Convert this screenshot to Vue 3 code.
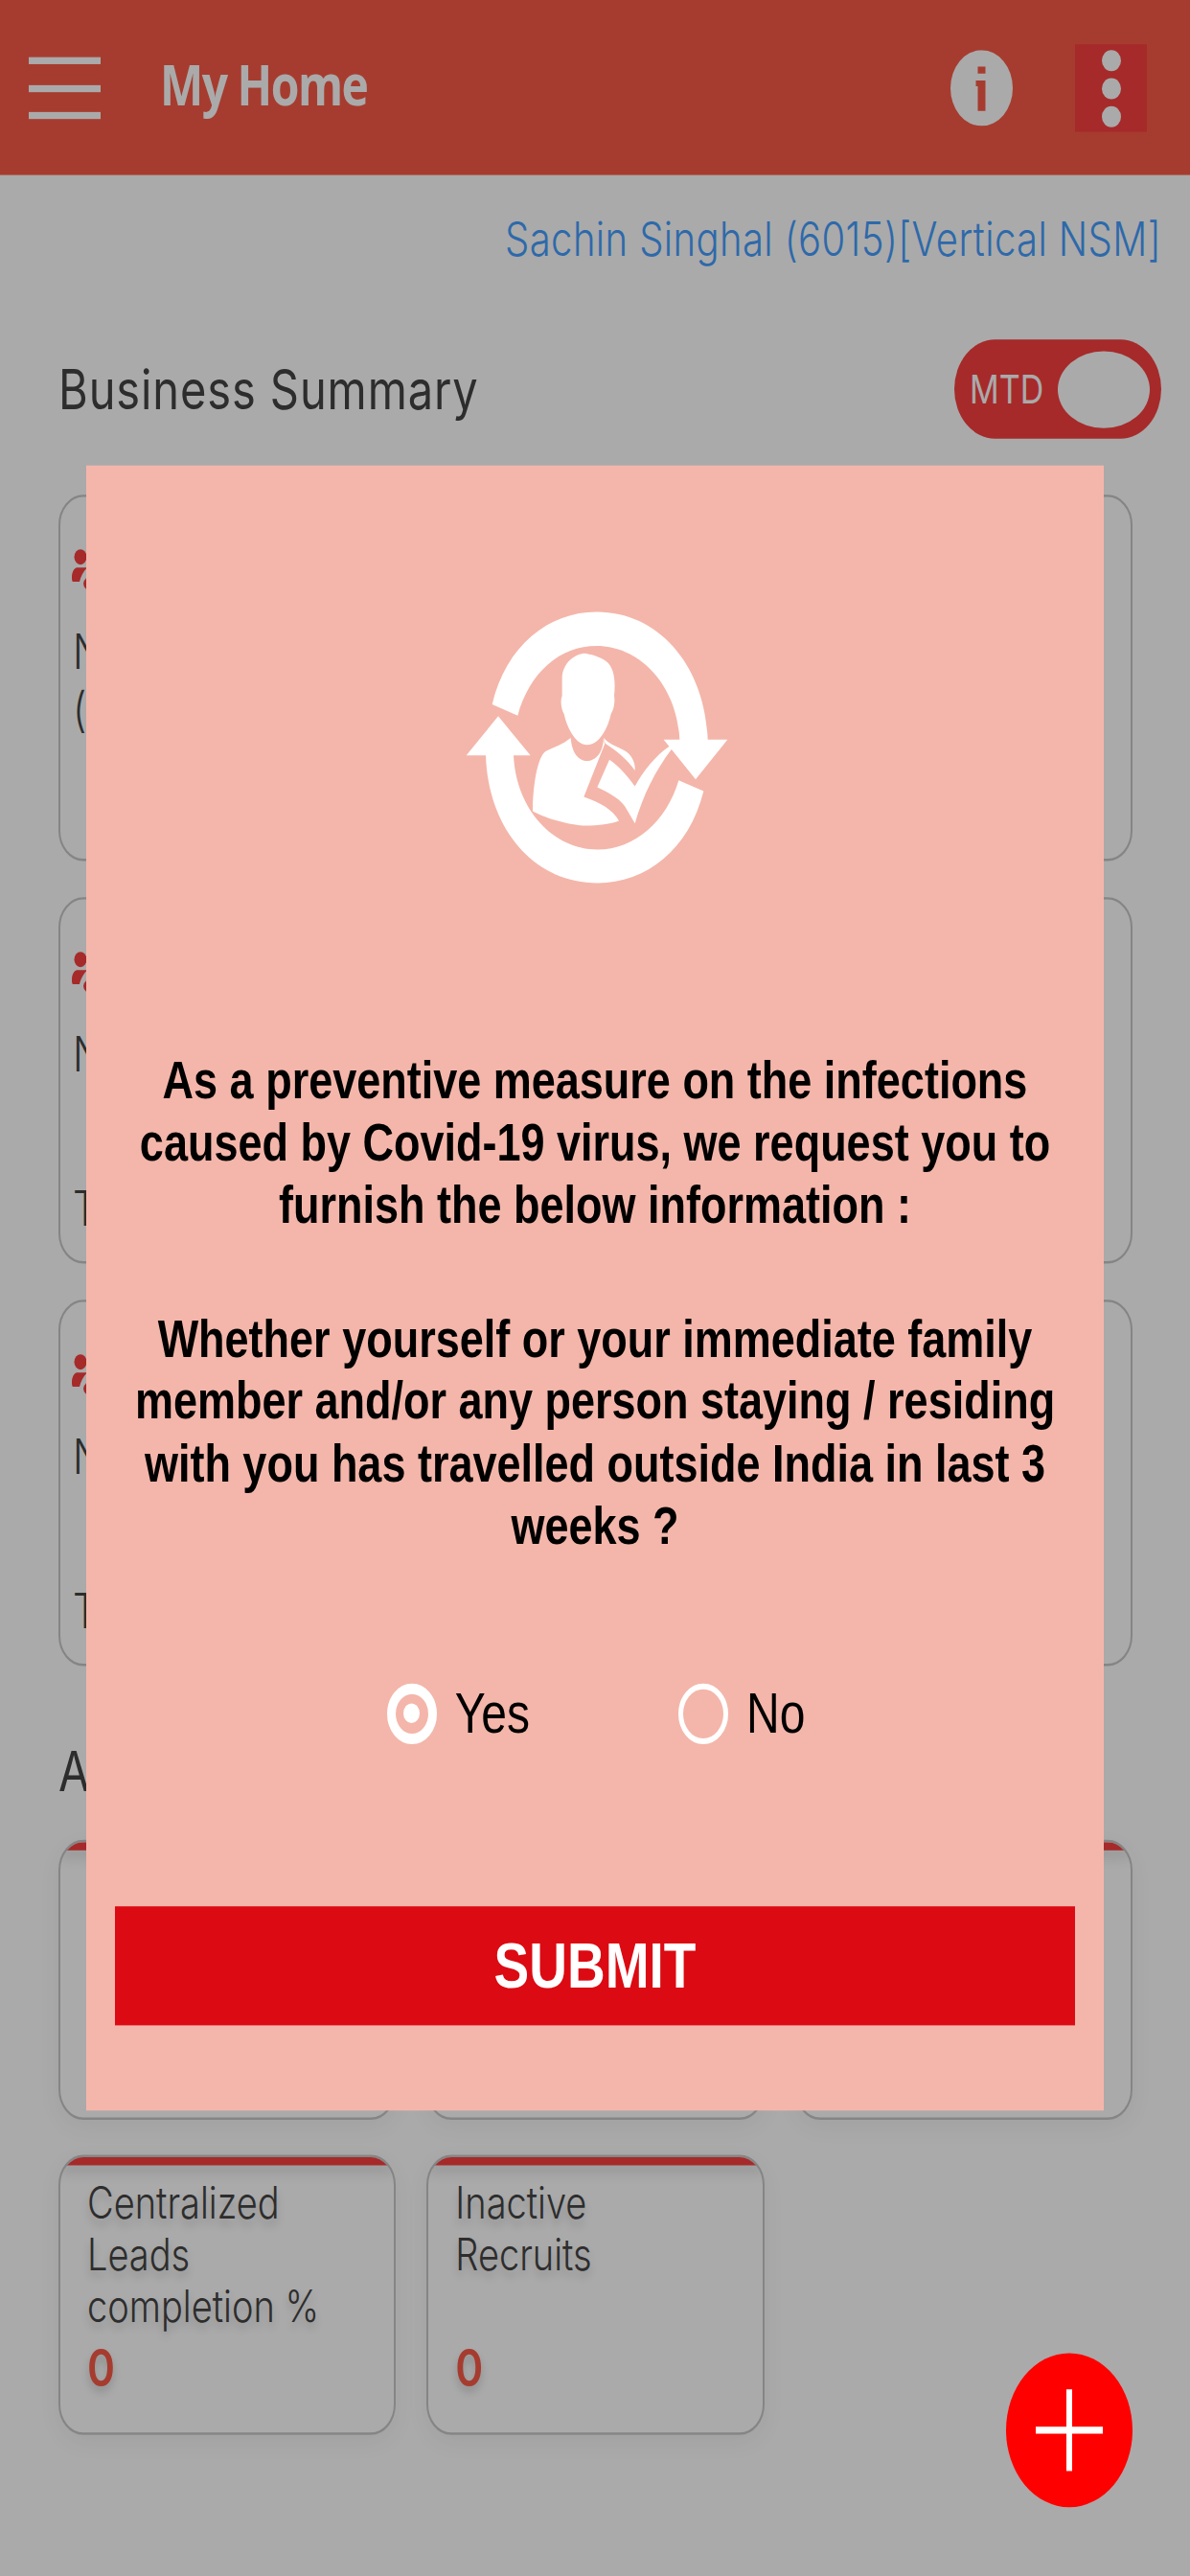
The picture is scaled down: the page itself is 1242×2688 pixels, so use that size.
<template>
  <div class="page">
    <div class="screen">
      <header class="topbar">
        <div class="menu-btn"><span></span><span></span><span></span></div>
        <div class="title">My Home</div>
        <svg class="info" viewBox="0 0 65 65">
          <circle cx="32.5" cy="32.5" r="32.5" fill="#fff" />
          <path d="M28.5 14h8v6h-8zM26.500 26h10v26h-8V31h-2z" fill="#fa5b47" />
        </svg>
        <div class="more-btn"><i></i><i></i><i></i></div>
      </header>

      <div class="user-line">Sachin Singhal (6015)[Vertical NSM]</div>

      <div class="summary-head">
        <h2 class="section-title">Business Summary</h2>
        <div class="toggle">
          <span>MTD</span>
          <b class="knob"></b>
        </div>
      </div>

      <div class="cards">
        <div v-for="card in cards" :key="card.id" class="card">
          <svg class="people" viewBox="0 0 40 50" preserveAspectRatio="none">
            <ellipse cx="9" cy="9" rx="6.500" ry="8" />
            <path d="M5 20h11c-4 4-7 10-8 15H2c-2 0-2-2-2-5 0-5 2-9 5-10z" />
            <ellipse cx="22" cy="37" rx="10" ry="8" />
          </svg>
          <div class="card-label">N</div>
          <div class="card-sub" :class="card.subClass">{{ card.sub }}</div>
        </div>
      </div>

      <h2 class="section-title second">A</h2>

      <div class="tiles">
        <div v-for="tile in tiles" :key="tile.id" class="tile">
          <div class="tile-bar"></div>
          <template v-if="tile.lines">
            <div class="tile-label">
              <div v-for="line in tile.lines" :key="line">{{ line }}</div>
            </div>
            <div class="tile-value">0</div>
          </template>
        </div>
      </div>

      <div class="dim">
        <div class="modal">
          <svg class="modal-icon" viewBox="0 0 1080 1020" preserveAspectRatio="none">
            <path d="M218 405C262 220 395 115 545 115c200 0 340 175 348 400h62L855 640 755 515h50C797 345 680 222 545 222c-115 0-210 83-247 218z" />
            <path d="M880 677C835 860 700 965 548 965c-203 0-343-175-350-400h-61l100-123 101 123h-53c8 170 125 295 263 295 117 0 217-90 254-217z" />
            <path d="M505 245c-35 5-68 35-68 80v53c-7 17-2 42 6 57 12 55 42 97 72 97 33 0 63-42 75-97 10-15 13-40 10-57 5-48 0-88-25-108-20-15-50-23-70-25z" />
            <path d="M464 510c-24 20-54 30-79 42-25 18-40 108-40 188 45 25 125 45 165 45s80-5 105-15c-20-35-55-55-110-75l65-165-3-20c-2 50-27 72-52 72s-47-22-51-72z" />
            <path d="M567 510l5 17c28 18 68 48 93 85 3-22-10-52-35-64-25-13-45-18-63-38z" />
            <path d="M775 535c-45 30-85 80-110 127-25-37-55-67-80-84l-38 87c43 20 78 40 93 70l25 43c25-88 65-168 115-233z" />
          </svg>

          <div class="question">
            <p>As a preventive measure on the infections caused by Covid-19 virus, we request you to furnish the below information :</p>
            <p>Whether yourself or your immediate family member and/or any person staying / residing with you has travelled outside India in last 3 weeks ?</p>
          </div>

          <div class="choices">
            <div class="choice">
              <span class="radio checked"><em></em></span>
              <span>Yes</span>
            </div>
            <div class="choice">
              <span class="radio"></span>
              <span>No</span>
            </div>
          </div>

          <button class="submit">SUBMIT</button>
        </div>
      </div>

      <div class="fab"><span class="plus-v"></span><span class="plus-h"></span></div>
    </div>
  </div>
</template>

<script setup>
const cards = [
  { id: 1, sub: '(', subClass: 'paren' },
  { id: 2, sub: 'T', subClass: '' },
  { id: 3, sub: 'T', subClass: '' }
]

const tiles = [
  { id: 1 },
  { id: 2 },
  { id: 3 },
  { id: 4, lines: ['Centralized', 'Leads', 'completion %'] },
  { id: 5, lines: ['Inactive', 'Recruits'] }
]
</script>

<style scoped>
.page {
  width: 1242px;
  height: 2688px;
  overflow: hidden;
}

/* the source shot is a 1242x2208 layout stretched to 2688 tall */
.screen {
  position: relative;
  width: 1242px;
  height: 2208px;
  background: #fff;
  transform: scaleY(1.2174);
  transform-origin: top left;
  font-family: Inter, "Liberation Sans", sans-serif;
  color: #444;
}

.topbar {
  display: flex;
  align-items: flex-start;
  height: 150px;
  background: #fa5b47;
  padding: 38px 45px 0 30px;
  box-sizing: border-box;
}

.menu-btn {
  display: flex;
  flex-direction: column;
  gap: 17.500px;
  width: 75px;
  margin-top: 11px;
}

.menu-btn span {
  height: 6px;
  background: #fff;
}

.title {
  font-family: "Open Sans", sans-serif;
  font-size: 48px;
  font-weight: 700;
  line-height: 60px;
  color: #fff;
  margin: 4px 0 0 62px;
  letter-spacing: -1.500px;
}

.info {
  width: 65px;
  height: 65px;
  margin: 5px 0 0 auto;
}

.more-btn {
  display: flex;
  flex-direction: column;
  align-items: center;
  gap: 6px;
  width: 75px;
  height: 75px;
  margin-left: 65px;
  padding-top: 5px;
  box-sizing: border-box;
  background: #fa4040;
}

.more-btn i {
  width: 20px;
  height: 18px;
  border-radius: 50%;
  background: #fff;
}

.user-line {
  margin-top: 32px;
  padding-right: 30px;
  text-align: right;
  font-size: 40px;
  font-weight: 300;
  line-height: 46px;
  letter-spacing: 0.4px;
  color: #449eff;
}

.summary-head {
  display: flex;
  justify-content: space-between;
  align-items: center;
  margin-top: 63px;
  padding: 0 30px 0 61px;
}

.section-title {
  margin: 0;
  font-size: 47px;
  font-weight: 400;
  line-height: 52px;
  letter-spacing: 0.9px;
  color: #444;
}

.toggle {
  display: flex;
  align-items: center;
  justify-content: space-between;
  width: 216px;
  height: 85px;
  padding: 0 12px 0 16px;
  box-sizing: border-box;
  border-radius: 43px;
  background: #fa4040;
  color: #fff;
  font-size: 34px;
}

.knob {
  width: 96px;
  height: 66px;
  border-radius: 50%;
  background: #fff;
}

.cards {
  display: flex;
  flex-direction: column;
  gap: 31px;
  margin: 48px 60px 0 61px;
}

.card {
  height: 314px;
  padding: 44px 0 0 12px;
  box-sizing: border-box;
  border: 2px solid #c8c8c8;
  border-radius: 26px;
}

.people {
  display: block;
  width: 40px;
  height: 41px;
  fill: #fa4040;
}

.card-label {
  margin: 22px 0 0 1px;
  font-size: 41px;
  font-weight: 300;
  line-height: 50px;
}

.card-sub {
  margin: 83px 0 0 1px;
  font-size: 41px;
  font-weight: 300;
  line-height: 50px;
}

.card-sub.paren {
  margin-top: 0;
}

.second {
  margin: 64px 0 0 61px;
}

.tiles {
  display: grid;
  grid-template-columns: repeat(3, 1fr);
  gap: 30px 32px;
  margin: 33px 60px 0 61px;
}

.tile {
  height: 240px;
  box-sizing: border-box;
  border: 2px solid #c8c8c8;
  border-radius: 26px;
  overflow: hidden;
  box-shadow: 0 6px 22px rgba(0, 0, 0, 0.05);
}

.tile-bar {
  height: 7px;
  background: #fa4040;
  box-shadow: 0 6px 12px rgba(0, 0, 0, 0.14);
}

.tile-label {
  height: 132px;
  margin-top: 10px;
  padding-left: 28px;
  font-size: 38px;
  font-weight: 300;
  line-height: 44px;
  text-shadow: 0 5px 8px rgba(0, 0, 0, 0.18);
}

.tile-value {
  padding-left: 28px;
  margin-top: 9px;
  font-size: 44px;
  font-weight: 600;
  line-height: 44px;
  color: #fa5b47;
  text-shadow: 0 5px 8px rgba(0, 0, 0, 0.18);
}

.dim {
  position: absolute;
  inset: 0;
  display: flex;
  justify-content: center;
  align-items: flex-start;
  padding-top: 399px;
  box-sizing: border-box;
  background: rgba(0, 0, 0, 0.335);
}

.modal {
  display: flex;
  flex-direction: column;
  align-items: center;
  width: 1062px;
  height: 1410px;
  padding: 94px 30px 0;
  box-sizing: border-box;
  background: #f4b6aa;
  font-family: "Liberation Sans", Arial, sans-serif;
  color: #000;
}

.modal-icon {
  width: 360px;
  height: 279px;
  fill: #fff;
}

.question {
  margin-top: 127px;
  text-align: center;
  font-size: 45px;
  font-weight: 700;
  line-height: 53.500px;
}

.question p {
  margin: 0 0 61px;
}

.choices {
  display: flex;
  gap: 155px;
  margin-top: 47px;
  padding-left: 2px;
  font-size: 48px;
  line-height: 52px;
}

.choice {
  display: flex;
  align-items: center;
  gap: 19px;
}

.radio {
  display: flex;
  align-items: center;
  justify-content: center;
  width: 52px;
  height: 52px;
  box-sizing: border-box;
  border: 5px solid #fff;
  border-radius: 50%;
}

.radio.checked {
  border-width: 9px;
}

.radio em {
  width: 17px;
  height: 17px;
  border-radius: 50%;
  background: #fff;
}

.submit {
  width: 1002px;
  height: 102px;
  margin-top: 139px;
  border: 0;
  background: #dc0a12;
  color: #fff;
  font-family: inherit;
  font-size: 55px;
  font-weight: 700;
}

.fab {
  position: absolute;
  left: 1050px;
  top: 2017px;
  width: 132px;
  height: 132px;
  border-radius: 50%;
  background: #f00;
}

.plus-v {
  position: absolute;
  left: 63px;
  top: 31px;
  width: 6px;
  height: 70px;
  background: #fff;
}

.plus-h {
  position: absolute;
  left: 31px;
  top: 63px;
  width: 70px;
  height: 6px;
  background: #fff;
}
</style>
